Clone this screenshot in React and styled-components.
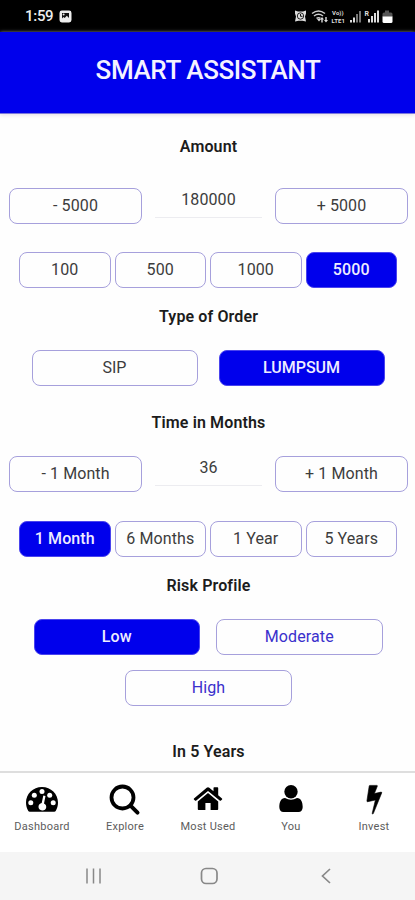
import React from "react";
import styled, { createGlobalStyle } from "styled-components";

const Global = createGlobalStyle`
  * { box-sizing: border-box; }
  body { margin: 0; background: #fff; }
  button { font: inherit; letter-spacing: inherit; }
`;

const Screen = styled.div`
  width: 415px;
  height: 900px;
  display: flex;
  flex-direction: column;
  overflow: hidden;
  background: #fefefe;
  font-family: Roboto, sans-serif;
  font-size: 16px;
  letter-spacing: 0.1px;
  color: #333;
`;

const StatusBar = styled.div`
  height: 32px;
  flex: none;
  background: #000;
  color: #eee;
  display: flex;
  align-items: center;
  justify-content: space-between;
  padding: 0 22px 0 25px;
`;

const Clock = styled.div`
  display: flex;
  align-items: center;
  gap: 6px;
  font-size: 15px;
  font-weight: 500;
  letter-spacing: -0.3px;
`;

const Header = styled.header`
  height: 82px;
  flex: none;
  background: #0000ec;
  border-bottom: 1px solid #7b78dc;
  box-shadow: 0 1px 4px #e4dce6;
  display: flex;
  align-items: center;
  justify-content: center;
  padding: 0 0 5px 1px;
`;

const Title = styled.h1`
  margin: 0;
  color: #f4f2ff;
  font-size: 26px;
  font-weight: 500;
  letter-spacing: -0.4px;
`;

const Content = styled.main`
  height: 657px;
  flex: none;
  overflow: hidden;
`;

const Heading = styled.h2`
  margin: ${(p) => p.$top}px 0 0;
  padding-left: 2px;
  height: 20px;
  line-height: 22px;
  text-align: center;
  color: #1c1c1c;
  font-size: 16px;
  font-weight: 600;
  letter-spacing: 0.12px;
`;

const Row = styled.div`
  display: flex;
  justify-content: center;
  gap: ${(p) => p.$gap}px;
  margin-top: ${(p) => p.$top}px;
  padding-left: ${(p) => p.$indent ?? 1}px;
`;

const Option = styled.button`
  width: ${(p) => p.$width}px;
  height: 36px;
  padding: 0 0 ${(p) => p.$lift ?? 1}px;
  border: 1px solid ${(p) => (p.$active ? "#4a44ee" : "#a6a0dc")};
  border-radius: 8px;
  background: ${(p) => (p.$active ? "#0000ec" : "#fefefe")};
  color: ${(p) => (p.$active ? "#eeecff" : p.$accent ? "#3a30cc" : "#3c3c3c")};
  font-weight: ${(p) => (p.$active ? 500 : 400)};
  letter-spacing: ${(p) => p.$spacing ?? 0.1}px;
  white-space: nowrap;
`;

const Value = styled.input`
  width: 107px;
  height: 30px;
  padding: 0 0 6px;
  border: 0;
  border-bottom: 1px solid #ececf0;
  background: transparent;
  color: #3c3c3c;
  font: inherit;
  letter-spacing: inherit;
  text-align: center;
  outline: none;
`;

const TabBar = styled.nav`
  height: 81px;
  flex: none;
  border-top: 2px solid #dedede;
  background: #fff;
  display: grid;
  grid-template-columns: repeat(5, 83px);
`;

const Tab = styled.div`
  display: flex;
  flex-direction: column;
  align-items: center;
  padding: 11px 0 0 1px;
  color: #000;
`;

const TabLabel = styled.span`
  margin-top: 4px;
  color: #5c5c5c;
  font-size: 11px;
  line-height: 14px;
  letter-spacing: 0.25px;
`;

const SystemNav = styled.div`
  height: 48px;
  flex: none;
  background: #f5f5f5;
  display: flex;
  align-items: center;
  justify-content: center;
  gap: 92px;
  padding-left: 3px;
`;

const PictureIcon = () => (
  <svg width="13" height="13" viewBox="0 0 13 13">
    <rect x=".5" y=".5" width="12" height="12" rx="2.4" fill="#eee" />
    <path d="M3 3h7v5L7.800 5.800 5.700 8 4.400 7 3 8.400z" fill="#111" />
    <circle cx="4.600" cy="4.500" r="1" fill="#eee" />
  </svg>
);

const StatusIcons = () => (
  <svg width="100" height="16" viewBox="293 8 100 16" fill="#ddd">
    <path d="M295 10.500l3 1h5l3-1v3l-1 3 1 5-3.500-.8h-4l-3.500.8 1-5-1-3z" />
    <circle cx="300.500" cy="16" r="3.200" fill="#ddd" stroke="#111" strokeWidth=".9" />
    <path d="M300.500 14v2.300h2" fill="none" stroke="#111" strokeWidth="1" />
    <g fill="none" stroke="#ccc" strokeWidth="1.500">
      <path d="M312 13.500q6.500-5 13 0" />
      <path d="M314 16q4.500-3.300 9 0" />
      <path d="M316.500 18.300q2-1.300 4 0" />
    </g>
    <path d="M317 19h4l-2 2.500zM322 17l2 2.500h-1.300v3h-1.400v-3H320zM326 22.500l-2-2.500h1.300v-3h1.400v3h1.300z" />
    <text x="332" y="14.500" fontSize="6" fontWeight="700" fontFamily="Roboto, sans-serif">Vo))</text>
    <text x="331.500" y="22.800" fontSize="6" fontWeight="700" fontFamily="Roboto, sans-serif">LTE1</text>
    <path d="M350 20h2v2.500h-2zM353 17.500h2v5h-2z" />
    <path d="M356 14h2v8.500h-2zM359 11h2v11.500h-2z" fill="#777" />
    <text x="364.500" y="16" fontSize="7" fontWeight="700" fontFamily="Roboto, sans-serif">R</text>
    <path d="M368 19h2v3.500h-2zM371 16h2v6.500h-2zM374 13h2v9.500h-2zM377 10.500h2v12h-2z" />
    <path d="M385 10.500h4v2h2q1.500 0 1.500 1.500v3h-10v-3q0-1.500 1.500-1.500h1z" fill="#555" />
    <path d="M382.500 16.500h10v5q0 1.500-1.500 1.500h-7q-1.500 0-1.500-1.500z" fill="#fff" />
  </svg>
);

const DashboardIcon = () => (
  <svg width="32" height="32" viewBox="0 0 32 32">
    <path d="M16 3C7 3 0 10 0 18.500c0 3.300.8 6 2.300 8.500.3.600.8.800 1.500.8h24.400c.7 0 1.200-.2 1.500-.8 1.500-2.500 2.300-5.200 2.300-8.500C32 10 25 3 16 3z" />
    <g fill="#fff">
      <circle cx="4.800" cy="18.800" r="2.500" />
      <circle cx="8.300" cy="11.200" r="2.500" />
      <circle cx="16" cy="7.600" r="2.500" />
      <circle cx="23.700" cy="11.200" r="2.500" />
      <circle cx="27.200" cy="18.800" r="2.500" />
      <path d="M17.300 11.500l2.200.5-1.500 7.600c1.600.8 2.500 2.200 2.200 3.800-.3 2-2.100 3.200-4.100 3-2.200-.2-3.800-1.900-3.600-4 .1-1.600 1.400-3 3.200-3.300z" />
    </g>
  </svg>
);

const SearchIcon = () => (
  <svg width="32" height="32" viewBox="0 0 32 32" fill="none" stroke="currentColor">
    <circle cx="13.500" cy="13.500" r="11" strokeWidth="3.800" />
    <path d="M21.500 21.700l7 7" strokeWidth="4" strokeLinecap="round" />
  </svg>
);

const HomeIcon = () => (
  <svg width="32" height="32" viewBox="0 0 32 32">
    <path d="M16 9L5.800 17.500V25c0 .6.500 1 1 1h6.600v-7h5.200v7h6.600c.5 0 1-.4 1-1v-7.500z" />
    <path d="M14.700 3.700c.8-.7 1.800-.7 2.600 0l4.200 3.500V4c0-.4.300-.7.700-.7h3.300c.4 0 .7.300.7.700v7.200l3.800 3.200c.3.300.3.700.1 1l-1.100 1.200c-.3.300-.7.300-1 .1L16 6.900 4 16.700c-.3.200-.7.200-1-.1l-1.100-1.200c-.2-.3-.2-.7.100-1z" />
  </svg>
);

const UserIcon = () => (
  <svg width="32" height="32" viewBox="0 0 32 32">
    <circle cx="16" cy="7.800" r="6.700" />
    <path d="M10 14.100q6 3.500 12 0c4 .1 5.700 4.100 5.700 8.900 0 3-1.700 5-4.200 5h-15c-2.500 0-4.200-2-4.200-5 0-4.800 1.700-8.800 5.700-8.900z" />
  </svg>
);

const BoltIcon = () => (
  <svg width="32" height="32" viewBox="0 0 32 32">
    <path d="M11.800 1.400h7c.5 0 .7.400.5.800l-2.900 7.400 6.600-1.500c.6-.1.900.3.700.8L15.300 29.600c-.2.600-1.300.5-1.100-.3l3.200-13.300-7.700 1.700c-.5.100-.9-.2-.8-.7L11.200 2c.1-.4.200-.6.600-.6z" stroke="#000" strokeWidth=".6" />
  </svg>
);

const TABS = [
  ["Dashboard", DashboardIcon],
  ["Explore", SearchIcon],
  ["Most Used", HomeIcon],
  ["You", UserIcon],
  ["Invest", BoltIcon],
];

const OptionRow = ({ items, active, top }) => (
  <Row $gap={4} $top={top}>
    {items.map((label) => (
      <Option key={label} $width={91.5} $active={label === active}>
        {label}
      </Option>
    ))}
  </Row>
);

const Stepper = ({ step, value, top }) => (
  <Row $gap={13} $top={top} $indent={2}>
    <Option $width={133}>- {step}</Option>
    <Value defaultValue={value} />
    <Option $width={133}>+ {step}</Option>
  </Row>
);

export default function App() {
  return (
    <Screen>
      <Global />
      <StatusBar>
        <Clock>
          1:59 <PictureIcon />
        </Clock>
        <StatusIcons />
      </StatusBar>
      <Header>
        <Title>SMART ASSISTANT</Title>
      </Header>
      <Content>
        <Heading $top={22}>Amount</Heading>
        <Stepper step="5000" value="180000" top={32} />
        <OptionRow items={["100", "500", "1000", "5000"]} active="5000" top={28} />
        <Heading $top={18}>Type of Order</Heading>
        <Row $gap={21} $top={24}>
          <Option $width={166} $spacing={0}>SIP</Option>
          <Option $width={166} $spacing={0} $active>LUMPSUM</Option>
        </Row>
        <Heading $top={26}>Time in Months</Heading>
        <Stepper step="1 Month" value="36" top={24} />
        <OptionRow items={["1 Month", "6 Months", "1 Year", "5 Years"]} active="1 Month" top={29} />
        <Heading $top={18}>Risk Profile</Heading>
        <Row $gap={16} $top={24}>
          <Option $width={166.5} $lift={2} $active>Low</Option>
          <Option $width={166.5} $lift={2} $accent>Moderate</Option>
        </Row>
        <Row $gap={0} $top={15} $indent={2}>
          <Option $width={167} $accent>High</Option>
        </Row>
        <Heading $top={35}>In 5 Years</Heading>
      </Content>
      <TabBar>
        {TABS.map(([label, Icon]) => (
          <Tab key={label}>
            <Icon />
            <TabLabel>{label}</TabLabel>
          </Tab>
        ))}
      </TabBar>
      <SystemNav>
        <svg width="24" height="24" viewBox="0 0 24 24" stroke="#888" strokeWidth="1.500">
          <path d="M6 4.500v15M12.500 4.500v15M19 4.500v15" />
        </svg>
        <svg width="24" height="24" viewBox="0 0 24 24" fill="none" stroke="#888" strokeWidth="1.700">
          <rect x="4.500" y="4.500" width="15.500" height="15" rx="4.500" />
        </svg>
        <svg width="24" height="24" viewBox="0 0 24 24" fill="none" stroke="#888" strokeWidth="1.700">
          <path d="M17 5l-7.500 7 7.500 7" />
        </svg>
      </SystemNav>
    </Screen>
  );
}
